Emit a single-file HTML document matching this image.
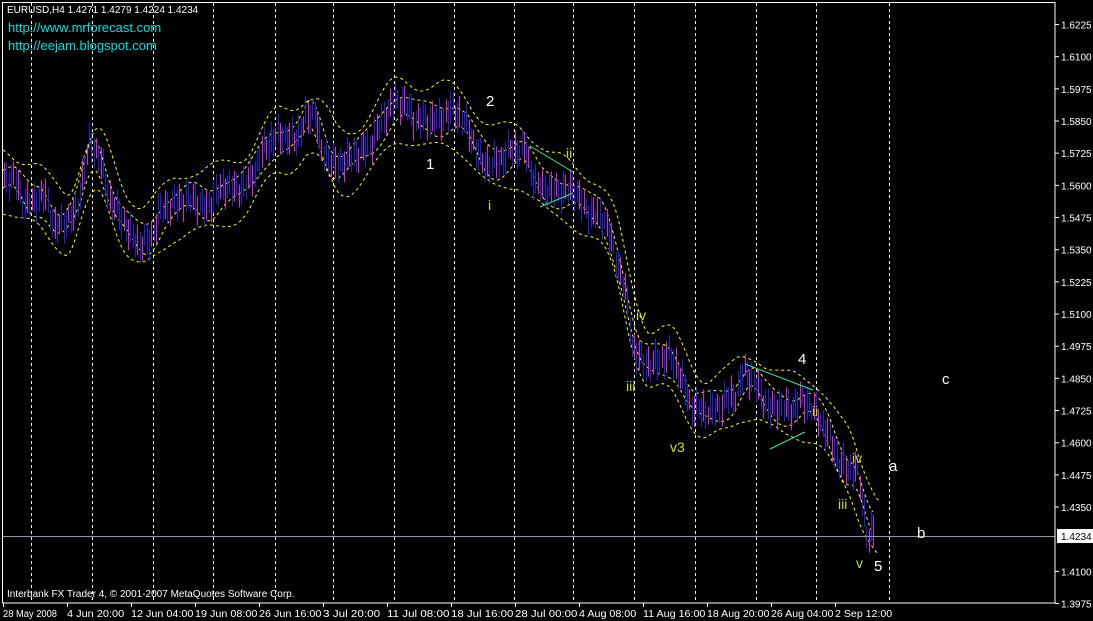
<!DOCTYPE html>
<html><head><meta charset="utf-8"><style>
html,body{margin:0;padding:0;background:#000;width:1093px;height:621px;overflow:hidden}
svg{display:block}
text{font-family:"Liberation Sans",sans-serif}
</style></head><body>
<svg id="s" width="1093" height="621" xmlns="http://www.w3.org/2000/svg">
<rect width="1093" height="621" fill="#000"/>
<g id="grid" stroke="#fff" stroke-width="1" stroke-dasharray="3,3"></g>
<g id="bands" fill="none" stroke="#ffff00" stroke-width="1" stroke-dasharray="3,3"></g>
<g id="bars" stroke-width="1"></g>
<line x1="2" y1="536.5" x2="1055" y2="536.5" stroke="#8a9aa8" stroke-width="1"/>
<rect x="2.5" y="2.5" width="1052.5" height="600.5" fill="none" stroke="#fff" stroke-width="1"/>
<g stroke="#33ee99" stroke-width="1">
<line x1="530" y1="146" x2="573" y2="172"/><line x1="540" y1="207" x2="573" y2="193"/>
<line x1="745" y1="364" x2="813" y2="390"/><line x1="770" y1="449" x2="805" y2="432"/>
</g>
<g id="axis" fill="#fff" font-size="10"></g>
<rect x="1057" y="529" width="36" height="14" fill="#fff"/>
<text x="1061" y="540" font-size="10" fill="#000">1.4234</text>
<text x="7" y="13" font-size="10" fill="#fff">EURUSD,H4  1.4271 1.4279 1.4224 1.4234</text>
<text x="8" y="32" font-size="13" fill="#00e0e0" font-family="Liberation Mono,monospace">http://www.mrforecast.com</text>
<text x="8" y="50" font-size="13" fill="#00e0e0" font-family="Liberation Mono,monospace">http://eejam.blogspot.com</text>
<text x="7" y="597" font-size="10" fill="#fff">Interbank FX Trader 4, © 2001-2007 MetaQuotes Software Corp.</text>
<g font-size="15" fill="#fff">
<text x="426" y="169">1</text><text x="486" y="106">2</text><text x="798" y="364">4</text><text x="874" y="571">5</text>
<text x="942" y="384">c</text><text x="889" y="471">a</text><text x="917" y="538">b</text>
</g>
<g font-size="14" fill="#c8e020">
<text x="488" y="210">i</text><text x="566" y="158">ii</text><text x="626" y="391">iii</text><text x="636" y="320">iv</text>
<text x="670" y="452">v3</text><text x="812" y="416">ii</text><text x="852" y="463">iv</text><text x="838" y="509">iii</text><text x="856" y="568">v</text>
</g>
</svg>
<script>
var NS="http://www.w3.org/2000/svg";
function el(p,t,a){var e=document.createElementNS(NS,t);for(var k in a)e.setAttribute(k,a[k]);document.getElementById(p).appendChild(e);return e;}
[31,92,153,213,275,333,394,454,514,573,634,695,756,816,889].forEach(function(x){el("grid","line",{x1:x+.5,y1:3,x2:x+.5,y2:602});});
for(var i=0;i<19;i++){var v=(1.6225-i*0.0125).toFixed(4);var y=24.5+i*32.17;
 if(v==="1.4225")continue;
 el("axis","line",{x1:1055,y1:y,x2:1059,y2:y,stroke:"#fff"});
 var t=el("axis","text",{x:1061,y:y+4});t.textContent=v;}
var dl=["28 May 2008","4 Jun 20:00","12 Jun 04:00","19 Jun 08:00","26 Jun 16:00","3 Jul 20:00","11 Jul 08:00","18 Jul 16:00","28 Jul 00:00","4 Aug 08:00","11 Aug 16:00","18 Aug 20:00","26 Aug 04:00","2 Sep 12:00"];
dl.forEach(function(s,i){var x=3+i*64;el("axis","line",{x1:x+.5,y1:603,x2:x+.5,y2:607,stroke:"#fff"});var t=el("axis","text",{x:x,y:617,"textLength":i==0?54:(s.length*5.2),"lengthAdjust":"spacingAndGlyphs"});t.textContent=s;});
var K=[[3,177],[15,180],[25,205],[35,200],[45,195],[55,230],[65,220],[75,215],[90,140],[100,160],[110,200],[120,215],[130,235],[140,245],[150,240],[160,210],[170,205],[180,200],[195,200],[205,210],[215,195],[225,185],[235,190],[245,185],[255,170],[265,145],[280,135],[295,140],[305,120],[315,110],[320,150],[335,165],[345,160],[355,155],[370,145],[385,115],[395,100],[405,105],[415,120],[425,120],[440,120],[450,110],[460,115],[470,135],[480,160],[490,165],[500,160],[510,150],[525,150],[535,185],[550,190],[565,190],[575,190],[585,210],[595,215],[605,220],[615,255],[625,290],[632,345],[640,360],[650,365],[660,360],[670,355],[680,375],[690,405],[700,410],[715,410],[725,400],[735,395],[745,370],[755,385],[770,410],[780,405],[790,410],[800,400],[810,405],[820,420],[830,440],[840,465],[850,470],[856,465],[862,500],[868,540],[873,530]];
function f(x){for(var i=0;i<K.length-1;i++){if(x<=K[i+1][0]){var a=K[i],b=K[i+1];return a[1]+(b[1]-a[1])*(x-a[0])/(b[0]-a[0]);}}return K[K.length-1][1];}
var n=0;
for(var x=4;x<=874;x+=2.3){n++;var y=f(x)+6*Math.sin(x*0.9)+3*Math.sin(x*2.3);var h=9+7*Math.abs(Math.sin(x*1.7));
 el("bars","line",{x1:Math.round(x)+.5,y1:y-h,x2:Math.round(x)+.5,y2:y+h,stroke:(n%3==0?"#2020e0":(n%2?"#e020e0":"#2020e0"))});}
function sm(x,w){var s=0,c=0;for(var d=-w;d<=w;d+=2){s+=f(Math.max(3,Math.min(873,x+d)));c++;}return s/c;}
function band(off,w,sh,x0,x1,ph){var p="";for(var x=x0;x<=x1;x+=3){var y=sm(x-sh,w)+off+7*Math.sin(x*0.11+ph);p+=(p?"L":"M")+x+","+y.toFixed(1);}el("bands","path",{d:p});}
band(-30,14,4,3,880,0);band(30,14,4,3,880,1);band(-12,8,2,3,875,2);band(12,8,2,3,875,3);
</script>
</body></html>
